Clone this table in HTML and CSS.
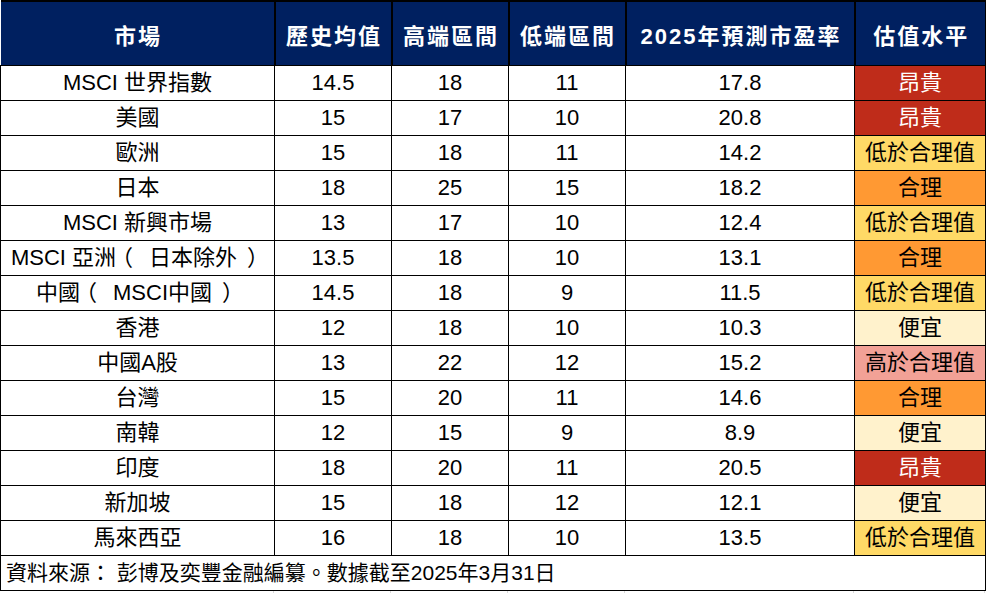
FILE: index.html
```html
<!DOCTYPE html>
<html lang="zh-Hant">
<head>
<meta charset="utf-8">
<title>市盈率估值</title>
<link rel="stylesheet" href="styles.css">
</head>
<body>
<table class="pe">
  <colgroup>
    <col class="c-market"><col class="c-num"><col class="c-num"><col class="c-num"><col class="c-fwd"><col class="c-val">
  </colgroup>
  <thead>
    <tr>
      <th>市場</th><th>歷史均值</th><th>高端區間</th><th>低端區間</th><th>2025年預測市盈率</th><th>估值水平</th>
    </tr>
  </thead>
  <tbody>
    <tr><td>MSCI 世界指數</td><td>14.5</td><td>18</td><td>11</td><td>17.8</td><td class="v-exp">昂貴</td></tr>
    <tr><td>美國</td><td>15</td><td>17</td><td>10</td><td>20.8</td><td class="v-exp">昂貴</td></tr>
    <tr><td>歐洲</td><td>15</td><td>18</td><td>11</td><td>14.2</td><td class="v-below">低於合理值</td></tr>
    <tr><td>日本</td><td>18</td><td>25</td><td>15</td><td>18.2</td><td class="v-fair">合理</td></tr>
    <tr><td>MSCI 新興市場</td><td>13</td><td>17</td><td>10</td><td>12.4</td><td class="v-below">低於合理值</td></tr>
    <tr><td>MSCI 亞洲<span class="p-open">（</span>日本除外<span class="p-close">）</span></td><td>13.5</td><td>18</td><td>10</td><td>13.1</td><td class="v-fair">合理</td></tr>
    <tr><td>中國<span class="p-open">（</span>MSCI中國<span class="p-close">）</span></td><td>14.5</td><td>18</td><td>9</td><td>11.5</td><td class="v-below">低於合理值</td></tr>
    <tr><td>香港</td><td>12</td><td>18</td><td>10</td><td>10.3</td><td class="v-cheap">便宜</td></tr>
    <tr><td>中國A股</td><td>13</td><td>22</td><td>12</td><td>15.2</td><td class="v-above">高於合理值</td></tr>
    <tr><td>台灣</td><td>15</td><td>20</td><td>11</td><td>14.6</td><td class="v-fair">合理</td></tr>
    <tr><td>南韓</td><td>12</td><td>15</td><td>9</td><td>8.9</td><td class="v-cheap">便宜</td></tr>
    <tr><td>印度</td><td>18</td><td>20</td><td>11</td><td>20.5</td><td class="v-exp">昂貴</td></tr>
    <tr><td>新加坡</td><td>15</td><td>18</td><td>12</td><td>12.1</td><td class="v-cheap">便宜</td></tr>
    <tr><td>馬來西亞</td><td>16</td><td>18</td><td>10</td><td>13.5</td><td class="v-below">低於合理值</td></tr>
  </tbody>
  <tfoot>
    <tr><td colspan="6" class="source">資料來源： 彭博及奕豐金融編纂。數據截至2025年3月31日</td></tr>
  </tfoot>
</table>
<div class="gridtail">
  <span></span><span></span><span></span><span></span><span></span><span></span>
</div>
</body>
</html>
```

FILE: styles.css
```css
html, body {
  margin: 0;
  padding: 0;
  background: #ffffff;
}

body {
  font-family: "Liberation Sans", "Noto Sans CJK TC", sans-serif;
  font-size: 21px;
  color: #000000;
}

.pe {
  border-collapse: collapse;
  table-layout: fixed;
  width: 985px;
}

.c-market { width: 274px; }
.c-num { width: 117px; }
.c-fwd { width: 229px; }
.c-val { width: 131px; }

.pe th {
  background: #002060;
  color: #ffffff;
  font-weight: bold;
  font-size: 22px;
  letter-spacing: 2px;
  height: 63px;
  padding: 0 0 0 2px;
  text-align: center;
  border: 2px solid #000000;
  border-bottom-width: 1px;
}

.pe thead th:first-child { border-left: none; }
.pe thead th:last-child { border-right: 1px solid #000000; }

.pe tbody td {
  font-size: 22px;
}

.pe td {
  height: 34px;
  padding: 0;
  text-align: center;
  border: 1px solid #000000;
  white-space: nowrap;
  line-height: 34px;
}

.p-open,
.p-close {
  font-feature-settings: "halt" 1;
}

.p-open {
  margin-left: 6px;
  margin-right: 16px;
}

.p-close {
  margin-left: 10px;
  margin-right: 6px;
}

.v-exp { background: #bf2c1a; color: #ffffff; }
.v-below { background: #ffd966; }
.v-fair { background: #ff9933; }
.v-cheap { background: #fff2cc; }
.v-above { background: #f2a196; }

.pe td.source {
  text-align: left;
  padding-left: 5px;
}

.gridtail {
  display: grid;
  grid-template-columns: 274px 117px 117px 117px 229px 131px;
  height: 3px;
}

.gridtail span {
  border-right: 1px solid #d9d9d9;
}
```
